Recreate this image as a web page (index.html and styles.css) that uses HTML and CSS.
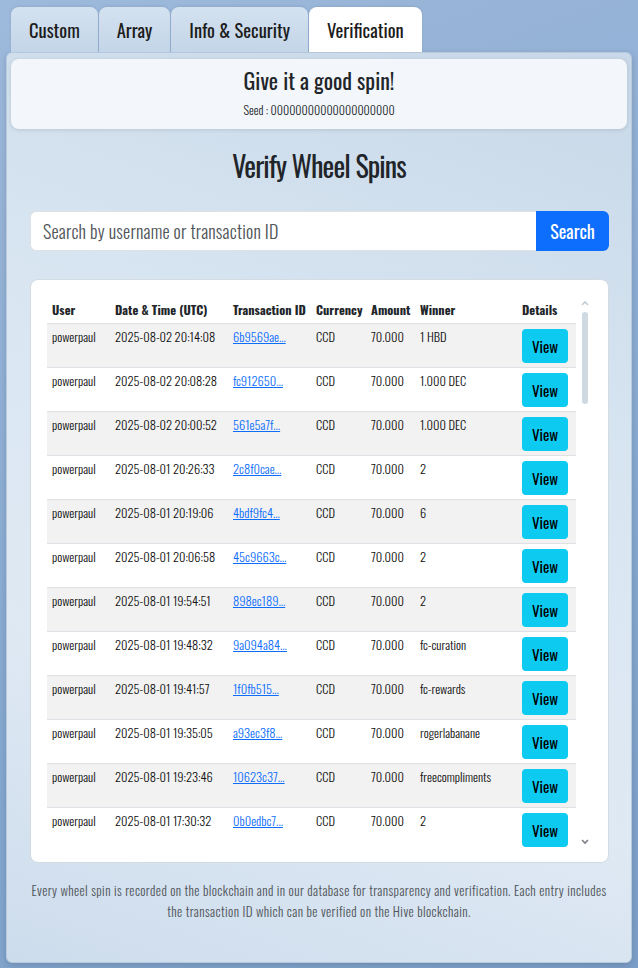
FILE: index.html
```html
<!DOCTYPE html>
<html lang="en">
<head>
  <meta charset="UTF-8" />
  <meta name="viewport" content="width=device-width, initial-scale=1.0">
  <title>Verify Wheel Spins</title>
  <link rel="stylesheet" href="styles.css">
</head>
<body>

  <div class="tabs">
    <button class="tab">Custom</button>
    <button class="tab">Array</button>
    <button class="tab">Info &amp; Security</button>
    <button class="tab active">Verification</button>
  </div>

  <div class="panel">
    <div class="spin-header">
      <h2>Give it a good spin!</h2>
      <div class="seed">Seed : 00000000000000000000</div>
    </div>

    <h1>Verify Wheel Spins</h1>

    <div class="search">
      <input type="text" placeholder="Search by username or transaction ID">
      <button>Search</button>
    </div>

    <div class="card">
      <div class="scroll">
        <table>
          <colgroup>
            <col style="width: 63px">
            <col style="width: 118px">
            <col style="width: 83px">
            <col style="width: 55px">
            <col style="width: 49px">
            <col style="width: 102px">
            <col>
          </colgroup>
          <thead>
            <tr>
              <th>User</th>
              <th>Date &amp; Time (UTC)</th>
              <th>Transaction ID</th>
              <th>Currency</th>
              <th>Amount</th>
              <th>Winner</th>
              <th>Details</th>
            </tr>
          </thead>
          <tbody id="rows"></tbody>
        </table>
      </div>
      <!-- fake scrollbar, headless hides the real one -->
      <div class="scrollbar">
        <svg class="arrow up" width="8" height="6" viewBox="0 0 8 6"><path d="M1 5 L4 2 L7 5" fill="none" stroke="currentColor" stroke-width="1.6"/></svg>
        <div class="thumb"></div>
        <div class="track"></div>
        <svg class="arrow down" width="8" height="6" viewBox="0 0 8 6"><path d="M1 1 L4 4 L7 1" fill="none" stroke="currentColor" stroke-width="1.6"/></svg>
      </div>
    </div>

    <p class="note">Every wheel spin is recorded on the blockchain and in our database for transparency and verification. Each entry includes the transaction ID which can be verified on the Hive blockchain.</p>
  </div>

  <script>
    const spins = [
      ['2025-08-02 20:14:08', '6b9569ae...', '1 HBD'],
      ['2025-08-02 20:08:28', 'fc912650...', '1.000 DEC'],
      ['2025-08-02 20:00:52', '561e5a7f...', '1.000 DEC'],
      ['2025-08-01 20:26:33', '2c8f0cae...', '2'],
      ['2025-08-01 20:19:06', '4bdf9fc4...', '6'],
      ['2025-08-01 20:06:58', '45c9663c...', '2'],
      ['2025-08-01 19:54:51', '898ec189...', '2'],
      ['2025-08-01 19:48:32', '9a094a84...', 'fc-curation'],
      ['2025-08-01 19:41:57', '1f0fb515...', 'fc-rewards'],
      ['2025-08-01 19:35:05', 'a93ec3f8...', 'rogerlabanane'],
      ['2025-08-01 19:23:46', '10623c37...', 'freecompliments'],
      ['2025-08-01 17:30:32', '0b0edbc7...', '2'],
      ['2025-08-01 17:12:09', '7d21f0a4...', '1 HBD'],
      ['2025-08-01 16:58:40', 'e3a90b12...', '4']
    ];

    const tbody = document.getElementById('rows');
    spins.forEach(s => {
      const tr = document.createElement('tr');
      tr.innerHTML = `
        <td>powerpaul</td>
        <td>${s[0]}</td>
        <td><a href="#">${s[1]}</a></td>
        <td>CCD</td>
        <td>70.000</td>
        <td>${s[2]}</td>
        <td><button class="view">View</button></td>`;
      tbody.appendChild(tr);
    });
  </script>
</body>
</html>
```

FILE: styles.css
```css
* {
  box-sizing: border-box;
}
body {
  font-family: "Oswald", "Roboto Condensed", "Liberation Sans Narrow", "DejaVu Sans Condensed", sans-serif;
  margin: 0;
  padding: 7px 6px 6px;
  min-height: 968px;
  background: linear-gradient(160deg, #9db9db 0%, #86a8d0 60%, #7b9ec8 100%);
  color: #212529;
}
.tabs {
  display: flex;
  gap: 1px;
  padding-left: 5px;
}
.tab {
  font-family: inherit;
  font-size: 18.5px;
  height: 45px;
  padding: 0 18px;
  border: none;
  border-radius: 8px 8px 0 0;
  background: linear-gradient(180deg, #d4e2f0, #c3d5e8);
  color: #1c1c1c;
  box-shadow: 0 -1px 3px rgba(0,0,0,0.08);
}
.tab.active {
  background: #fff;
}
.panel {
  background: linear-gradient(200deg, #c8d8e8 0%, #d9e6f2 40%, #dfe9f4 70%, #cddcec 100%);
  border: 1px solid #b6c9dd;
  border-radius: 6px;
  padding: 6px 4px 40px;
  height: 911px;
  box-shadow: 0 2px 6px rgba(0,0,0,0.15);
}
.spin-header {
  background: #f3f7fb;
  border-radius: 8px;
  box-shadow: 0 1px 4px rgba(0,0,0,0.12);
  text-align: center;
  padding: 6px 0 11px;
}
.spin-header h2 {
  margin: 0;
  font-size: 22px;
  line-height: 30px;
  font-weight: normal;
}
.seed {
  font-size: 12px;
  line-height: 16px;
  font-weight: 300;
  margin-top: 7px;
}
h1 {
  text-align: center;
  font-size: 28px;
  line-height: 36px;
  letter-spacing: -0.9px;
  font-weight: normal;
  margin: 19px 0 27px;
}
.search {
  display: flex;
  margin: 0 18px 28px 19px;
}
.search input {
  flex: 1;
  height: 40px;
  border: 1px solid #dee2e6;
  border-right: none;
  border-radius: 6px 0 0 6px;
  padding: 0 12px;
  font-family: inherit;
  font-size: 18px;
  font-weight: 300;
  letter-spacing: 0.2px;
}
.search input::placeholder {
  color: #50555a;
}
.search button {
  width: 73px;
  background: #0d6efd;
  color: #fff;
  border: none;
  border-radius: 0 6px 6px 0;
  font-family: inherit;
  font-size: 18px;
}
.card {
  display: flex;
  background: #fff;
  border: 1px solid #d3dbe3;
  border-radius: 8px;
  margin: 0 18px 0 19px;
  padding: 16px 16px 13px 16px;
}
.scroll {
  flex: 1;
  height: 553px;
  overflow: hidden;
}
.scrollbar {
  width: 16px;
  display: flex;
  flex-direction: column;
  align-items: center;
  padding: 4px 0 4px 2px;
}
.arrow {
  display: block;
  flex: none;
}
.arrow.up {
  color: #c4ccd4;
}
.arrow.down {
  color: #7a7f85;
}
.thumb {
  width: 6px;
  height: 92px;
  margin-top: 6px;
  border-radius: 3px;
  background: #cfd9e2;
}
.track {
  flex: 1;
}
table {
  width: 100%;
  table-layout: fixed;
  border-collapse: collapse;
  font-size: 12.5px;
}
th {
  text-align: left;
  font-weight: bold;
  line-height: 18px;
  padding: 5px 5px 4px;
  border-bottom: 1px solid #dee2e6;
  white-space: nowrap;
}
td {
  vertical-align: top;
  line-height: 18px;
  font-weight: 300;
  color: #111;
  padding: 4px 5px 0;
  height: 44px;
  border-bottom: 1px solid #dee2e6;
  white-space: nowrap;
}
tbody tr:nth-child(odd) td {
  background: #f2f2f2;
}
td a {
  color: #0d6efd;
}
.view {
  font-family: inherit;
  font-size: 15px;
  font-weight: normal;
  background: #0dcaf0;
  border: none;
  border-radius: 4px;
  width: 46px;
  height: 34px;
  margin-top: 1px;
  color: #000;
}
.note {
  text-align: center;
  color: #50555a;
  font-size: 13px;
  font-weight: 300;
  letter-spacing: 0.4px;
  line-height: 21px;
  margin: 17px 14px 0;
}
```
